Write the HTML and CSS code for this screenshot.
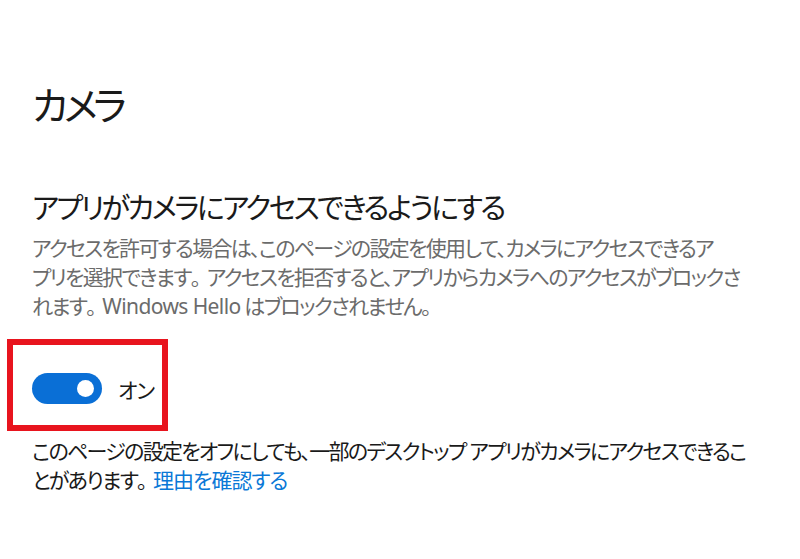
FILE: index.html
```html
<!DOCTYPE html>
<html lang="ja">
<head>
    <meta charset="UTF-8">
    <meta name="viewport" content="width=device-width, initial-scale=1.0">
    <title>カメラ</title>
    <link rel="stylesheet" href="styles.css">
</head>
<body>
    <main class="page">
        <h1 class="title">カメラ</h1>
        <h2 class="heading">アプリがカメラにアクセスできるようにする</h2>
        <p class="desc">
            アクセスを許可する場合は、このページの設定を使用して、カメラにアクセスできるア<br>
            プリを選択できます<span class="full">。</span>アクセスを拒否すると、アプリからカメラへのアクセスがブロックさ<br>
            れます<span class="full">。</span><span class="latin">Windows Hello</span> はブロックされません。
        </p>
        <div class="toggle-box">
            <span class="switch"><span class="knob"></span></span>
            <span class="state">オン</span>
        </div>
        <p class="note">
            このページの設定をオフにしても、一部のデスクトップ アプリがカメラにアクセスできるこ<br>
            とがあります<span class="full">。</span><a class="link" href="#">理由を確認する</a>
        </p>
    </main>
</body>
</html>
```

FILE: styles.css
```css
/* Settings page */
body {
    margin: 0;
    background-color: #FFFFFF;
    color: #1A1A1A;
    font-family: 'Noto Sans', 'Noto Sans CJK JP', sans-serif;
    font-feature-settings: "palt";
}

.page {
    padding: 78px 0 0 32px;
}

.title {
    margin: 0;
    font-size: 39px;
    font-weight: 400;
    line-height: 54px;
    letter-spacing: -4.5px;
}

.heading {
    margin: 56px 0 0;
    font-size: 29px;
    font-weight: 400;
    line-height: 40px;
    letter-spacing: -2.6px;
}

.desc {
    margin: 6px 0 0;
    font-size: 21px;
    line-height: 29px;
    color: #6B6B6B;
    letter-spacing: -1.7px;
}

.full {
    font-feature-settings: normal;
    letter-spacing: -5px;
}

.latin {
    letter-spacing: -0.6px;
}

.toggle-box {
    display: flex;
    align-items: center;
    box-sizing: border-box;
    width: 161px;
    height: 92px;
    margin: 18px 0 0 -25px;
    padding: 7px 0 0 19px;
    border: 6px solid #E8141E;
}

.switch {
    display: flex;
    align-items: center;
    justify-content: flex-end;
    box-sizing: border-box;
    width: 70px;
    height: 31px;
    padding-right: 8px;
    border-radius: 16px;
    background-color: #0A6FD6;
}

.knob {
    width: 17px;
    height: 17px;
    border-radius: 50%;
    background-color: #FFFFFF;
}

.state {
    margin-left: 16px;
    font-size: 21px;
    letter-spacing: -1px;
}

.note {
    margin: 6px 0 0;
    font-size: 21px;
    line-height: 29px;
    letter-spacing: -1.7px;
}

.link {
    color: #0A78D7;
    text-decoration: none;
    letter-spacing: -1px;
}
```
